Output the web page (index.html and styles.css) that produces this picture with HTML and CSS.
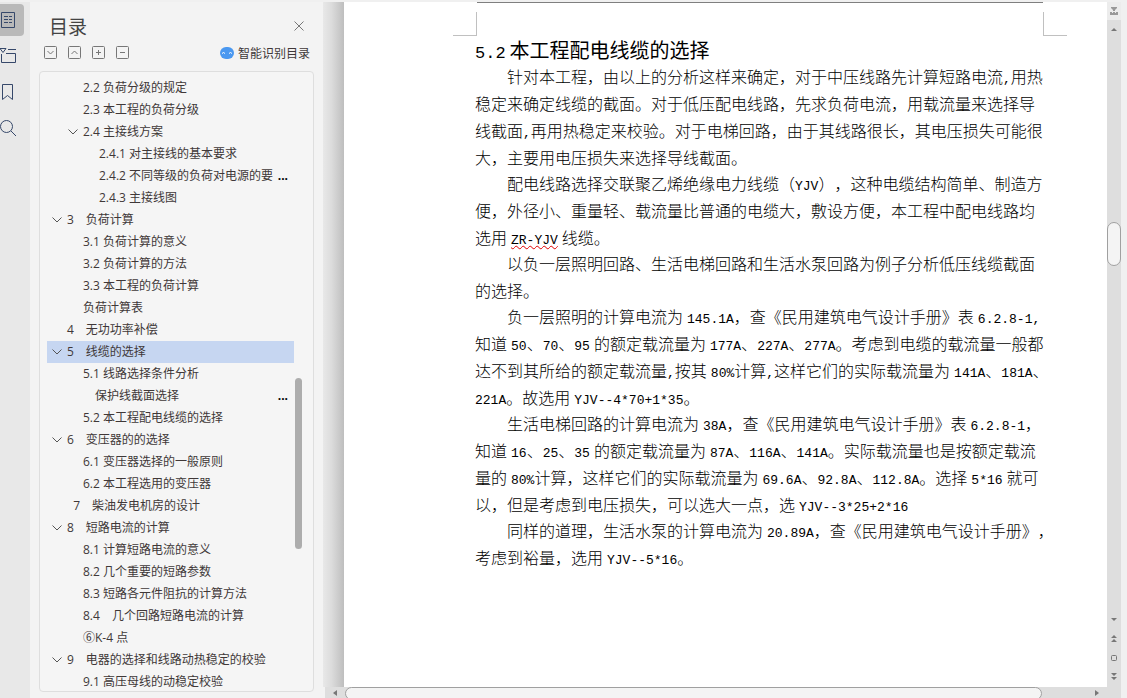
FILE: index.html
```html
<!DOCTYPE html>
<html lang="zh-CN">
<head>
    <meta charset="UTF-8">
    <meta name="viewport" content="width=device-width, initial-scale=1.0">
    <title>目录</title>
    <link rel="stylesheet" href="styles.css">
</head>
<body>
    <div class="app">
        <nav class="rail">
            <button class="rail-btn active" aria-label="目录">
                <svg width="16" height="18" viewBox="0 0 16 18"><path d="M1.5 1.5h13v15h-13zM4 5.500h4M4 8.500h4M4 11.500h4M9 5.500h3M9 8.500h3M9 11.500h3"/></svg>
            </button>
            <button class="rail-btn" aria-label="章节">
                <svg width="16" height="18" viewBox="0 0 16 18"><path d="M1.500 7v8.500h14v-9H6M8 2.500h8M0 1.500h6L3 5.500z"/></svg>
            </button>
            <button class="rail-btn" aria-label="书签">
                <svg width="16" height="18" viewBox="0 0 16 18"><path d="M2.500 1.500h10v15l-5-4-5 4z"/></svg>
            </button>
            <button class="rail-btn" aria-label="查找">
                <svg width="16" height="18" viewBox="0 0 16 18"><circle cx="6.500" cy="7.500" r="6"/><path d="M11 12l5 5"/></svg>
            </button>
        </nav>

        <aside class="panel">
            <header class="panel-header">
                <h1>目录</h1>
                <button class="close" aria-label="关闭">
                    <svg width="10" height="10" viewBox="0 0 10 10"><path d="M.5.5l9 9M9.500.5l-9 9"/></svg>
                </button>
            </header>
            <div class="tools">
                <button aria-label="展开"><svg width="13" height="13" viewBox="0 0 13 13"><rect x=".5" y=".5" width="12" height="12" rx="1"/><path d="M3.500 5l3 3 3-3"/></svg></button>
                <button aria-label="收起"><svg width="13" height="13" viewBox="0 0 13 13"><rect x=".5" y=".5" width="12" height="12" rx="1"/><path d="M3.500 8l3-3 3 3"/></svg></button>
                <button aria-label="增加"><svg width="13" height="13" viewBox="0 0 13 13"><rect x=".5" y=".5" width="12" height="12" rx="1"/><path d="M4 6.500h5M6.500 4v5"/></svg></button>
                <button aria-label="减少"><svg width="13" height="13" viewBox="0 0 13 13"><rect x=".5" y=".5" width="12" height="12" rx="1"/><path d="M4 6.500h5"/></svg></button>
                <a href="#" class="smart">
                    <svg width="14" height="12" viewBox="0 0 14 12"><rect width="14" height="12" rx="6"/><path d="M2 6.500q1.500-2 3 0M9 6.500q1.500-2 3 0"/></svg>
                    智能识别目录
                </a>
            </div>
            <div class="outline">
                <ul id="toc"></ul>
                <div class="outline-track">
                    <div class="before"></div>
                    <div class="thumb"></div>
                    <div class="after"></div>
                </div>
            </div>
        </aside>

        <div class="viewer">
            <div class="canvas">
                <div class="gutter"></div>
                <main class="page">
                    <div class="header-line"></div>
                    <div class="marks"><span class="mark-left"></span><span class="mark-right"></span></div>
                    <article>
                        <h2><span class="en">5.2</span>本工程配电线缆的选择</h2>
                        <p>针对本工程，由以上的分析这样来确定，对于中压线路先计算短路电流<i>,</i>用热<br>
                        稳定来确定线缆的截面。对于低压配电线路，先求负荷电流，用载流量来选择导<br>
                        线截面<i>,</i>再用热稳定来校验。对于电梯回路，由于其线路很长，其电压损失可能很<br>
                        大，主要用电压损失来选择导线截面。</p>
                        <p>配电线路选择交联聚乙烯绝缘电力线缆（<i>YJV</i>），这种电缆结构简单、制造方<br>
                        便，外径小、重量轻、载流量比普通的电缆大，敷设方便，本工程中配电线路均<br>
                        选用<i class="pre post typo">ZR-YJV</i>线缆。</p>
                        <p>以负一层照明回路、生活电梯回路和生活水泵回路为例子分析低压线缆截面<br>
                        的选择。</p>
                        <p>负一层照明的计算电流为<i class="pre">145.1A</i>，查《民用建筑电气设计手册》表<i class="pre">6.2.8-1,</i><br>
                        知道<i class="pre">50</i>、<i>70</i>、<i class="post">95</i>的额定载流量为<i class="pre">177A</i>、<i>227A</i>、<i>277A</i>。考虑到电缆的载流量一般都<br>
                        达不到其所给的额定载流量<i>,</i>按其<i class="pre">80%</i>计算<i>,</i>这样它们的实际载流量为<i class="pre">141A</i>、<i>181A</i>、<br>
                        <i>221A</i>。故选用<i class="pre">YJV--4*70+1*35</i>。</p>
                        <p>生活电梯回路的计算电流为<i class="pre">38A</i>，查《民用建筑电气设计手册》表<i class="pre">6.2.8-1</i>，<br>
                        知道<i class="pre">16</i>、<i>25</i>、<i class="post">35</i>的额定载流量为<i class="pre">87A</i>、<i>116A</i>、<i>141A</i>。实际载流量也是按额定载流<br>
                        量的<i class="pre">80%</i>计算，这样它们的实际载流量为<i class="pre">69.6A</i>、<i>92.8A</i>、<i>112.8A</i>。选择<i class="pre post">5*16</i>就可<br>
                        以，但是考虑到电压损失，可以选大一点，选<i class="pre">YJV--3*25+2*16</i></p>
                        <p>同样的道理，生活水泵的计算电流为<i class="pre">20.89A</i>，查《民用建筑电气设计手册》，<br>
                        考虑到裕量，选用<i class="pre">YJV--5*16</i>。</p>
                    </article>
                </main>
            </div>
            <div class="hscroll">
                <button aria-label="向左"><svg width="4" height="6" viewBox="0 0 4 6"><path d="M4 0v6L0 3z"/></svg></button>
                <div class="hthumb"></div>
                <button class="right" aria-label="向右"><svg width="4" height="6" viewBox="0 0 4 6"><path d="M0 0v6l4-3z"/></svg></button>
            </div>
        </div>

        <div class="vscroll">
            <button class="ruler" aria-label="标尺"><svg width="8" height="8" viewBox="0 0 8 8"><path d="M1 0h6v1L5 3v1H3V3L1 1zM0 5h2v1h1V5h2v1h1V5h2v3H0z"/></svg></button>
            <button aria-label="向上"><svg width="6" height="3" viewBox="0 0 6 3"><path d="M0 3h6L3 0z"/></svg></button>
            <div class="before"></div>
            <div class="thumb"></div>
            <div class="after"></div>
            <button aria-label="向下"><svg width="6" height="3" viewBox="0 0 6 3"><path d="M0 0h6L3 3z"/></svg></button>
            <button aria-label="上一页"><svg width="6" height="7" viewBox="0 0 6 7"><path d="M0 3h6L3 0zM0 7h6L3 4z"/></svg></button>
            <button aria-label="选择浏览对象"><svg class="box" width="6" height="6" viewBox="0 0 6 6"><rect x=".5" y=".5" width="5" height="5" rx="1"/></svg></button>
            <button aria-label="下一页"><svg width="6" height="7" viewBox="0 0 6 7"><path d="M0 0h6L3 3zM0 4h6L3 7z"/></svg></button>
        </div>
    </div>

    <script>
        const items = [
            { level: 2, text: '2.2 负荷分级的规定' },
            { level: 2, text: '2.3 本工程的负荷分级' },
            { level: 2, text: '2.4 主接线方案', open: true },
            { level: 3, text: '2.4.1 对主接线的基本要求' },
            { level: 3, text: '2.4.2 不同等级的负荷对电源的要', more: true },
            { level: 3, text: '2.4.3 主接线图' },
            { level: 1, text: '3　负荷计算', open: true },
            { level: 2, text: '3.1 负荷计算的意义' },
            { level: 2, text: '3.2 负荷计算的方法' },
            { level: 2, text: '3.3 本工程的负荷计算' },
            { level: 2, text: '负荷计算表' },
            { level: 1, text: '4　无功功率补偿' },
            { level: 1, text: '5　线缆的选择', open: true, selected: true },
            { level: 2, text: '5.1 线路选择条件分析' },
            { level: 2, text: '　保护线截面选择', more: true },
            { level: 2, text: '5.2 本工程配电线缆的选择' },
            { level: 1, text: '6　变压器的的选择', open: true },
            { level: 2, text: '6.1 变压器选择的一般原则' },
            { level: 2, text: '6.2 本工程选用的变压器' },
            { level: 1, text: '  7　柴油发电机房的设计' },
            { level: 1, text: '8　短路电流的计算', open: true },
            { level: 2, text: '8.1 计算短路电流的意义' },
            { level: 2, text: '8.2 几个重要的短路参数' },
            { level: 2, text: '8.3 短路各元件阻抗的计算方法' },
            { level: 2, text: '8.4　几个回路短路电流的计算' },
            { level: 2, text: '⑥K-4 点' },
            { level: 1, text: '9　电器的选择和线路动热稳定的校验', open: true },
            { level: 2, text: '9.1 高压母线的动稳定校验' }
        ];

        const arrow = '<button class="toggle" aria-label="折叠"><svg width="10" height="6" viewBox="0 0 10 6"><path d="M.5.5L5 5 9.500.5"/></svg></button>';

        items.forEach(item => {
            const li = document.createElement('li');
            li.className = `level-${item.level}`;
            if (item.selected) li.classList.add('selected');
            li.innerHTML = `${item.open ? arrow : '<span class="toggle"></span>'}<a href="#">${item.text}</a>${item.more ? '<span class="more">...</span>' : ''}`;
            document.getElementById('toc').appendChild(li);
        });
    </script>
</body>
</html>
```

FILE: styles.css
```css
* {
    margin: 0;
    padding: 0;
    box-sizing: border-box;
}

body {
    font-family: "Open Sans", "Noto Sans CJK SC", sans-serif;
    font-size: 12px;
    color: #403838;
    background-color: #f3f3f3;
}

button {
    display: flex;
    align-items: center;
    justify-content: center;
    background: none;
    border: none;
    cursor: pointer;
}

a {
    color: inherit;
    text-decoration: none;
}

svg {
    display: block;
    flex: none;
    fill: none;
}

.app {
    display: flex;
    height: 100vh;
    border-top: 2px solid #f0f0f0;
    overflow: hidden;
}

/* Left icon rail */
.rail {
    flex: none;
    display: flex;
    flex-direction: column;
    gap: 4px;
    width: 30px;
    padding-top: 2px;
    background-color: #e8e8e8;
}

.rail-btn {
    justify-content: flex-start;
    width: 24px;
    height: 32px;
    border-radius: 0 4px 4px 0;
    stroke: #36486a;
}

.rail-btn.active {
    background-color: #b9b9b9;
}

/* Outline panel */
.panel {
    flex: none;
    display: flex;
    flex-direction: column;
    width: 293px;
    padding: 8px 9px 6px;
    background-color: #f3f3f3;
}

.panel-header {
    display: flex;
    align-items: center;
    justify-content: space-between;
    height: 32px;
    padding: 0 10px;
}

.panel-header h1 {
    font-size: 19px;
    font-weight: normal;
    color: #444;
}

.close {
    stroke: #777;
}

.tools {
    display: flex;
    align-items: center;
    gap: 11px;
    height: 21px;
    padding: 0 4px 0 5px;
    stroke: #777;
}

.smart {
    display: flex;
    align-items: center;
    gap: 4px;
    margin-left: auto;
}

.smart rect {
    fill: #4a98f0;
    stroke: none;
}

.smart path {
    stroke: #fff;
}

.outline {
    flex: 1;
    display: flex;
    min-height: 0;
    margin-top: 8px;
    padding: 5px 11px 4px 7px;
    background-color: #f5f5f5;
    border: 1px solid #dedede;
    border-radius: 4px;
}

.outline ul {
    flex: 1;
    list-style: none;
    overflow: hidden;
}

.outline li {
    display: flex;
    align-items: center;
    height: 22px;
    padding-right: 6px;
    line-height: 22px;
    white-space: pre;
}

.outline li.selected {
    background-color: #c6d6f1;
}

.level-2 {
    padding-left: 16px;
}

.level-3 {
    padding-left: 32px;
}

.toggle {
    width: 20px;
    height: 22px;
    stroke: #555;
}

.more {
    margin-left: auto;
    font-weight: bold;
    color: #000;
}

.outline-track {
    display: flex;
    flex-direction: column;
    width: 8px;
    padding-left: 1px;
}

.outline-track .before {
    flex: 301;
}

.outline-track .thumb {
    flex: 171;
    background-color: #adadad;
    border-radius: 4px;
}

.outline-track .after {
    flex: 138;
}

/* Document area */
.viewer {
    flex: 1;
    display: flex;
    flex-direction: column;
    min-width: 0;
}

.canvas {
    flex: 1;
    display: flex;
    min-height: 0;
}

.gutter {
    flex: none;
    width: 21px;
    background: linear-gradient(to right, #e8e8e8, #dcdcdc 40%, #bebebe);
}

.page {
    flex: 1;
    min-width: 0;
    overflow: hidden;
    background-color: #fff;
}

.header-line {
    height: 1px;
    margin: 0 64px 9px 133px;
    background-color: #7f7f7f;
}

.marks {
    display: flex;
    justify-content: space-between;
    margin: 0 40px 0 109px;
}

.marks span {
    width: 24px;
    height: 24px;
    border-bottom: 1px solid #c0c0c0;
}

.mark-left {
    border-right: 1px solid #c0c0c0;
}

.mark-right {
    border-left: 1px solid #c0c0c0;
}

article {
    padding-left: 131px;
    font-family: "Noto Sans CJK SC", sans-serif;
    font-size: 16px;
    font-weight: 300;
    line-height: 27px;
    color: #000;
    white-space: nowrap;
    text-spacing-trim: space-all;
}

article h2 {
    font-size: 20px;
    font-weight: normal;
}

article h2 .en {
    margin-right: 4px;
    font-family: "Liberation Mono", monospace;
    font-size: 17px;
    line-height: 1;
}

article p {
    margin-bottom: -1px;
    text-indent: 32px;
}

/* Half-width runs inside the Chinese text */
article i {
    font-family: "Liberation Mono", monospace;
    font-size: 13px;
    font-style: normal;
    line-height: 1;
}

article .pre {
    margin-left: 4px;
}

article .post {
    margin-right: 4px;
}

article .typo {
    text-decoration: underline wavy #e00000 1px;
}

/* Scroll bars */
.hscroll {
    flex: none;
    display: flex;
    height: 11px;
    margin-left: 2px;
    background-color: #dedede;
    overflow: hidden;
}

.hscroll button {
    width: 20px;
}

.hscroll .right {
    margin-left: 45px;
}

.hscroll path,
.vscroll path {
    fill: #777;
}

.hthumb {
    flex: 1;
    height: 13px;
    background-color: #f4f4f4;
    border: 1px solid #a0a0a0;
    border-radius: 7px;
}

.vscroll {
    flex: none;
    display: flex;
    flex-direction: column;
    width: 20px;
    padding-bottom: 12px;
    background-color: #dedede;
    border-right: 6px solid #f0f0f0;
}

.vscroll button {
    flex: none;
    height: 19px;
}

.vscroll .ruler {
    height: 18px;
    background-color: #ececec;
}

.vscroll .ruler path {
    fill: #999;
}

.vscroll .box {
    stroke: #777;
}

.vscroll .before {
    flex: 183;
}

.vscroll .thumb {
    height: 44px;
    background-color: #f4f4f4;
    border: 1px solid #a0a0a0;
    border-radius: 7px;
}

.vscroll .after {
    flex: 344;
}
```
